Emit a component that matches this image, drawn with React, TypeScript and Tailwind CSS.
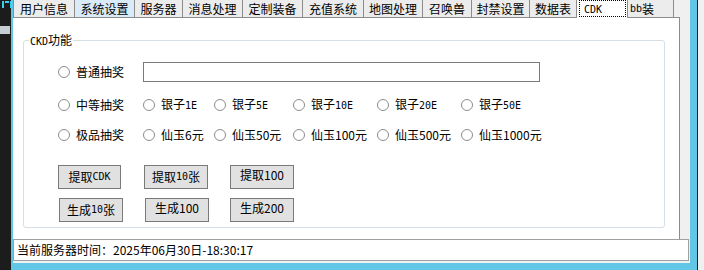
import React from "react";

const CJK = "font-['Noto_Sans_CJK_SC',sans-serif]";
const MONO = "font-['DejaVu_Sans_Mono',monospace] text-[10px]";

function Radio() {
  return <span className="block w-[12px] h-[12px] shrink-0 rounded-full border border-[#8c8c8c] bg-white" />;
}

function Opt({ className, children }: { className: string; children: React.ReactNode }) {
  return (
    <div className={"flex items-center gap-[6px] " + className}>
      <Radio />
      <span className="text-[12px] leading-[14px] text-black whitespace-nowrap">{children}</span>
    </div>
  );
}

function Btn({ className, raised, children }: { className: string; raised?: boolean; children: React.ReactNode }) {
  return (
    <div
      className={
        "h-[24px] flex items-center justify-center bg-[#e1e1e1] border border-[#7a7a7a] text-[12px] leading-[14px] text-black whitespace-nowrap " +
        (raised ? "pb-[5px] " : "") +
        className
      }
    >
      {children}
    </div>
  );
}

const tabs: { label: React.ReactNode; w: string; hover?: boolean }[] = [
  { label: "用户信息", w: "w-[61px]" },
  { label: "系统设置", w: "w-[60px]", hover: true },
  { label: "服务器", w: "w-[48px]" },
  { label: "消息处理", w: "w-[60px]" },
  { label: "定制装备", w: "w-[60px]" },
  { label: "充值系统", w: "w-[61px]" },
  { label: "地图处理", w: "w-[59px]" },
  { label: "召唤兽", w: "w-[49px]" },
  { label: "封禁设置", w: "w-[58px]" },
  { label: "数据表", w: "w-[47px]" },
];

export default function App() {
  return (
    <div className={"flex w-[704px] h-[270px] overflow-hidden bg-[#1c1c1c] " + CJK}>
      <div className="w-[11px] h-full flex flex-col bg-[#1c1c1c]">
        <div className="mt-[1px] ml-[2px] flex gap-[1px]">
          <div className="w-[2px] h-[7px] bg-[#35d0f0]" />
          <div className="w-[4px] h-[2px] bg-[#35d0f0]" />
          <div className="w-[1px] h-[7px] bg-[#35d0f0]" />
        </div>
        <div className="mt-[18px] h-[8px] w-[10px] bg-[#c5cdd2]" />
      </div>
      <div className="w-[686px] h-full bg-[#62c6e6] pl-[2px] pr-[7px] pb-[7px] flex">
        <div className="flex-1 bg-[#f0f0f0] flex flex-col">
          <div className="w-[667px] flex flex-col">
            <div className="flex h-[18px]">
              {tabs.map((t, i) => (
                <div
                  key={i}
                  className={
                    "h-[18px] border-l border-b border-[#8c8c8c] flex items-center justify-center pt-[1px] text-[12px] leading-[14px] text-black whitespace-nowrap " +
                    t.w +
                    (t.hover ? " bg-[#d9eaf9]" : " bg-[#ececec]")
                  }
                >
                  {t.label}
                </div>
              ))}
              <div className="w-[51px] h-[18px] border-l border-[#8c8c8c] bg-white">
                <div className="ml-[2px] w-[47px] h-[17px] border border-dotted border-black pl-[4px] pt-[1px] text-[12px] leading-[12px] text-black">
                  <span className={MONO}>CDK</span>
                </div>
              </div>
              <div className="w-[47px] h-[18px] border-l border-r border-b border-[#8c8c8c] bg-[#ececec] flex items-center pl-[2px] pt-[1px] text-[12px] leading-[14px] text-black whitespace-nowrap">
                <span className={MONO}>bb</span>装
              </div>
              <div className="flex-1 h-[18px] border-b border-[#8c8c8c]" />
            </div>
            <div className="h-[221px] bg-white border-r border-[#8c8c8c] pt-[22px] pl-[10px]">
              <div className="relative w-[642px] h-[188px] border border-[#d5dfe5] rounded-[3px] flex flex-col">
                <div className="absolute top-[-8px] left-[5px] bg-white px-[1px] text-[12px] leading-[14px] text-black whitespace-nowrap">
                  <span className={MONO}>CKD</span>功能
                </div>

                <div className="mt-[21px] h-[20px] flex items-center pl-[34px]">
                  <Opt className="w-[85px]">普通抽奖</Opt>
                  <div className="w-[397px] h-[20px] border border-[#7a7a7a] bg-white" />
                </div>

                <div className="mt-[14px] h-[18px] flex items-center pl-[34px]">
                  <Opt className="w-[85px]">中等抽奖</Opt>
                  <Opt className="w-[71px]">银子<span className={MONO}>1E</span></Opt>
                  <Opt className="w-[79px]">银子<span className={MONO}>5E</span></Opt>
                  <Opt className="w-[84px]">银子<span className={MONO}>10E</span></Opt>
                  <Opt className="w-[84px]">银子<span className={MONO}>20E</span></Opt>
                  <Opt className="w-[84px]">银子<span className={MONO}>50E</span></Opt>
                </div>

                <div className="mt-[12px] h-[18px] flex items-center pl-[34px]">
                  <Opt className="w-[85px]">极品抽奖</Opt>
                  <Opt className="w-[71px]">仙玉6元</Opt>
                  <Opt className="w-[79px]">仙玉50元</Opt>
                  <Opt className="w-[84px]">仙玉100元</Opt>
                  <Opt className="w-[84px]">仙玉500元</Opt>
                  <Opt className="w-[84px]">仙玉1000元</Opt>
                </div>

                <div className="mt-[21px] flex pl-[34px]">
                  <Btn className="w-[63px]">提取<span className={MONO}>CDK</span></Btn>
                  <Btn className="w-[64px] ml-[23px]">提取<span className={MONO}>10</span>张</Btn>
                  <Btn className="w-[64px] ml-[22px]" raised>提取100</Btn>
                </div>

                <div className="mt-[9px] flex pl-[35px]">
                  <Btn className="w-[64px]">生成<span className={MONO}>10</span>张</Btn>
                  <Btn className="w-[64px] ml-[22px]" raised>生成100</Btn>
                  <Btn className="w-[64px] ml-[21px]" raised>生成200</Btn>
                </div>
              </div>
            </div>
          </div>
          <div className="h-[22px] w-[676px] border border-[#a0a0a0] bg-white flex items-center pl-[3px] text-[12px] leading-[14px] text-black whitespace-nowrap">
            当前服务器时间：2025年06月30日-18:30:17
          </div>
        </div>
      </div>
      <div className="w-[1px] h-full bg-[#1c1c1c]" />
      <div className="flex-1 h-full bg-[#f0f0f0]" />
    </div>
  );
}
